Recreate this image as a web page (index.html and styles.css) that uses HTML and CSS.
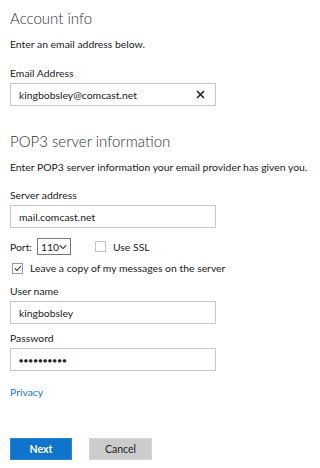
FILE: index.html
```html
<!DOCTYPE html>
<html>
<head>
<meta charset="utf-8">
<link rel="stylesheet" href="styles.css">
</head>
<body>
<div class="page">
  <h1 class="heading">Account info</h1>
  <p class="intro">Enter an email address below.</p>
  <label class="label label-1">Email Address</label>
  <div class="field field-clear">
    <span class="value">kingbobsley@comcast.net</span>
    <svg class="clear" width="9" height="9" viewBox="0 0 9 9"><path d="M1 1L8 8M8 1L1 8" stroke="#222" stroke-width="1.6"/></svg>
  </div>

  <h1 class="heading heading-2">POP3 server information</h1>
  <p class="intro">Enter POP3 server information your email provider has given you.</p>
  <label class="label label-2">Server address</label>
  <div class="field"><span class="value">mail.comcast.net</span></div>

  <div class="port-row">
    <span class="port-label">Port:</span>
    <div class="select"><span class="select-value">110</span><svg width="10" height="6" viewBox="0 0 10 6"><path d="M1 1L5 5L9 1" fill="none" stroke="#222" stroke-width="1.3"/></svg></div>
    <span class="check"></span>
    <span class="check-text">Use SSL</span>
  </div>
  <div class="check-row">
    <span class="check checked"><svg width="8" height="7" viewBox="0 0 8 7"><path d="M1 3.5L3 5.5L7 1" fill="none" stroke="#333" stroke-width="1.1"/></svg></span>
    <span class="check-text">Leave a copy of my messages on the server</span>
  </div>

  <label class="label label-3">User name</label>
  <div class="field"><span class="value">kingbobsley</span></div>
  <label class="label label-4">Password</label>
  <div class="field"><span class="value dots">●●●●●●●●●●</span></div>

  <a class="privacy">Privacy</a>

  <div class="buttons">
    <button class="btn btn-primary">Next</button>
    <button class="btn btn-secondary">Cancel</button>
  </div>
</div>
</body>
</html>
```
FILE: styles.css
```css
html, body {
  margin: 0;
  padding: 0;
  background: #fff;
}
body {
  font-family: Lato, "Liberation Sans", sans-serif;
  color: #222;
  font-size: 10.4px;
}
.page {
  padding: 6px 10px 0 10px;
  display: flex;
  flex-direction: column;
  align-items: flex-start;
}
.heading {
  font-family: Lato, sans-serif;
  font-weight: 300;
  font-size: 15px;
  line-height: 24px;
  margin: 0;
  color: #333;
  white-space: nowrap;
}
.heading-2 {
  margin-top: 23px;
}
.intro {
  margin: 7px 0 0 0;
  line-height: 14px;
  white-space: nowrap;
}
.label {
  line-height: 14px;
  display: block;
}
.label-1 {
  margin-top: 15px;
}
.label-2 {
  margin-top: 14px;
}
.label-3 {
  margin-top: 9px;
}
.label-4 {
  margin-top: 7px;
}
.field {
  box-sizing: border-box;
  width: 206px;
  height: 23px;
  margin-top: 3px;
  border: 1px solid #c8c8c8;
  display: flex;
  align-items: center;
  padding: 0 8px;
}
.field-clear {
  justify-content: space-between;
  padding-right: 10px;
}
.value {
  line-height: 14px;
}
.dots {
  font-size: 7px;
  letter-spacing: 0.6px;
}
.port-row {
  display: flex;
  align-items: center;
  margin-top: 10px;
  height: 17px;
}
.port-label {
  margin-right: 5px;
}
.select {
  box-sizing: border-box;
  height: 17px;
  width: 34px;
  border: 1px solid #7a7a7a;
  display: flex;
  align-items: center;
  justify-content: space-between;
  padding: 0 3px 0 3px;
  margin-right: 24px;
}
.select-value {
  font-weight: 400;
}
.check {
  box-sizing: border-box;
  width: 11px;
  height: 11px;
  border: 1px solid #c4c4c4;
  display: flex;
  align-items: center;
  justify-content: center;
  margin-right: 7px;
}
.checked {
  border-color: #9a9a9a;
}
.check-row {
  display: flex;
  align-items: center;
  margin-top: 6px;
  padding-left: 2px;
  line-height: 14px;
}
.privacy {
  color: #1a76cc;
  margin-top: 14px;
  line-height: 14px;
}
.buttons {
  display: flex;
  gap: 17px;
  margin-top: 39px;
}
.btn {
  box-sizing: border-box;
  width: 62px;
  height: 22px;
  font-family: inherit;
  font-size: 10.5px;
  font-weight: 700;
  border: 1px solid transparent;
  padding: 0;
}
.btn-primary {
  background: #0f74cc;
  color: #fff;
  border-color: #2a86d6;
}
.btn-secondary {
  background: #cccccc;
  color: #222;
  font-weight: 400;
  border-color: #d6d6d6;
  width: 63px;
}
```
